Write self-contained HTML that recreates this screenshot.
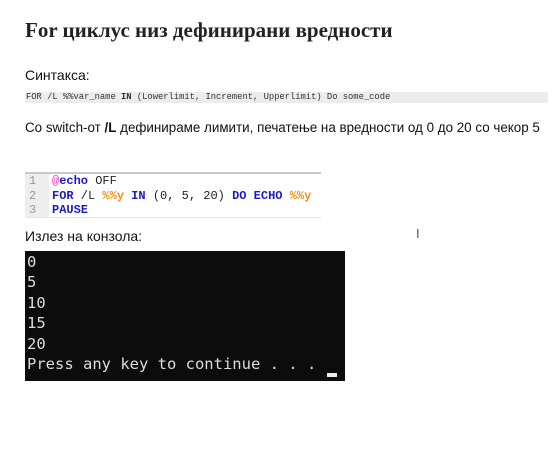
<!DOCTYPE html>
<html><head><meta charset="utf-8"><style>
*{margin:0;padding:0;box-sizing:border-box}
body{width:559px;height:472px;background:#fff;position:relative;overflow:hidden;font-family:"Liberation Sans",sans-serif;color:#111}
.a{position:absolute;white-space:nowrap}
h1{position:absolute;left:25px;top:18px;font:bold 21px "Liberation Serif","DejaVu Serif",serif;color:#222;white-space:nowrap}
.syn{left:25px;top:67px;font-size:14px}
.bar{position:absolute;left:25px;top:92px;width:523px;height:11px;background:#ececec;font:8.8px "Liberation Mono",monospace;color:#333;padding-left:1px;line-height:11px;white-space:nowrap}
.p{left:25px;top:120px;font-size:13.4px}
.code{position:absolute;left:25px;top:172px;width:296px;height:46px;border-top:2px solid #c8c8c8;border-bottom:1px solid #dde6f5;background:#fff}
.gut{position:absolute;left:0;top:0;width:24px;height:100%;background:#eee;color:#999;font:12px "Liberation Mono",monospace;padding-left:4px;line-height:14.5px}
.src{position:absolute;left:27px;top:0;font:12px "Liberation Mono",monospace;line-height:14.5px;color:#222;white-space:pre}
.k{color:#1a1acc;font-weight:bold}.v{color:#f0901a;font-weight:bold}.m{color:#e040c0}
.iz{left:25px;top:228px;font-size:14px}
.con{position:absolute;left:25px;top:251px;width:320px;height:130px;background:#0c0c0c;color:#ddd;font:15.5px "DejaVu Sans Mono",monospace;line-height:20.4px;padding:1px 0 0 2px;white-space:pre}
.cur{position:absolute;left:327px;top:373px;width:10px;height:4px;background:#eee}
</style></head><body>
<h1>For циклус низ дефинирани вредности</h1>
<div class="a syn">Синтакса:</div>
<div class="bar">FOR /L %%var_name <b>IN</b> (Lowerlimit, Increment, Upperlimit) Do some_code</div>
<div class="a p">Со switch-от <b>/L</b> дефинираме лимити, печатење на вредности од 0 до 20 со чекор 5</div>
<div class="code"><div class="gut">1<br>2<br>3</div><div class="src"><span class="m">@</span><span class="k">echo</span> OFF
<span class="k">FOR</span> /L <span class="v">%%y</span> <span class="k">IN</span> (0, 5, 20) <span class="k">DO ECHO</span> <span class="v">%%y</span>
<span class="k">PAUSE</span></div></div>
<div class="a iz">Излез на конзола:</div>
<div class="con">0
5
10
15
20
Press any key to continue . . .</div>
<div class="cur"></div>
<div class="a" style="left:416px;top:226px;font-size:13px;color:#555">I</div>
</body></html>
